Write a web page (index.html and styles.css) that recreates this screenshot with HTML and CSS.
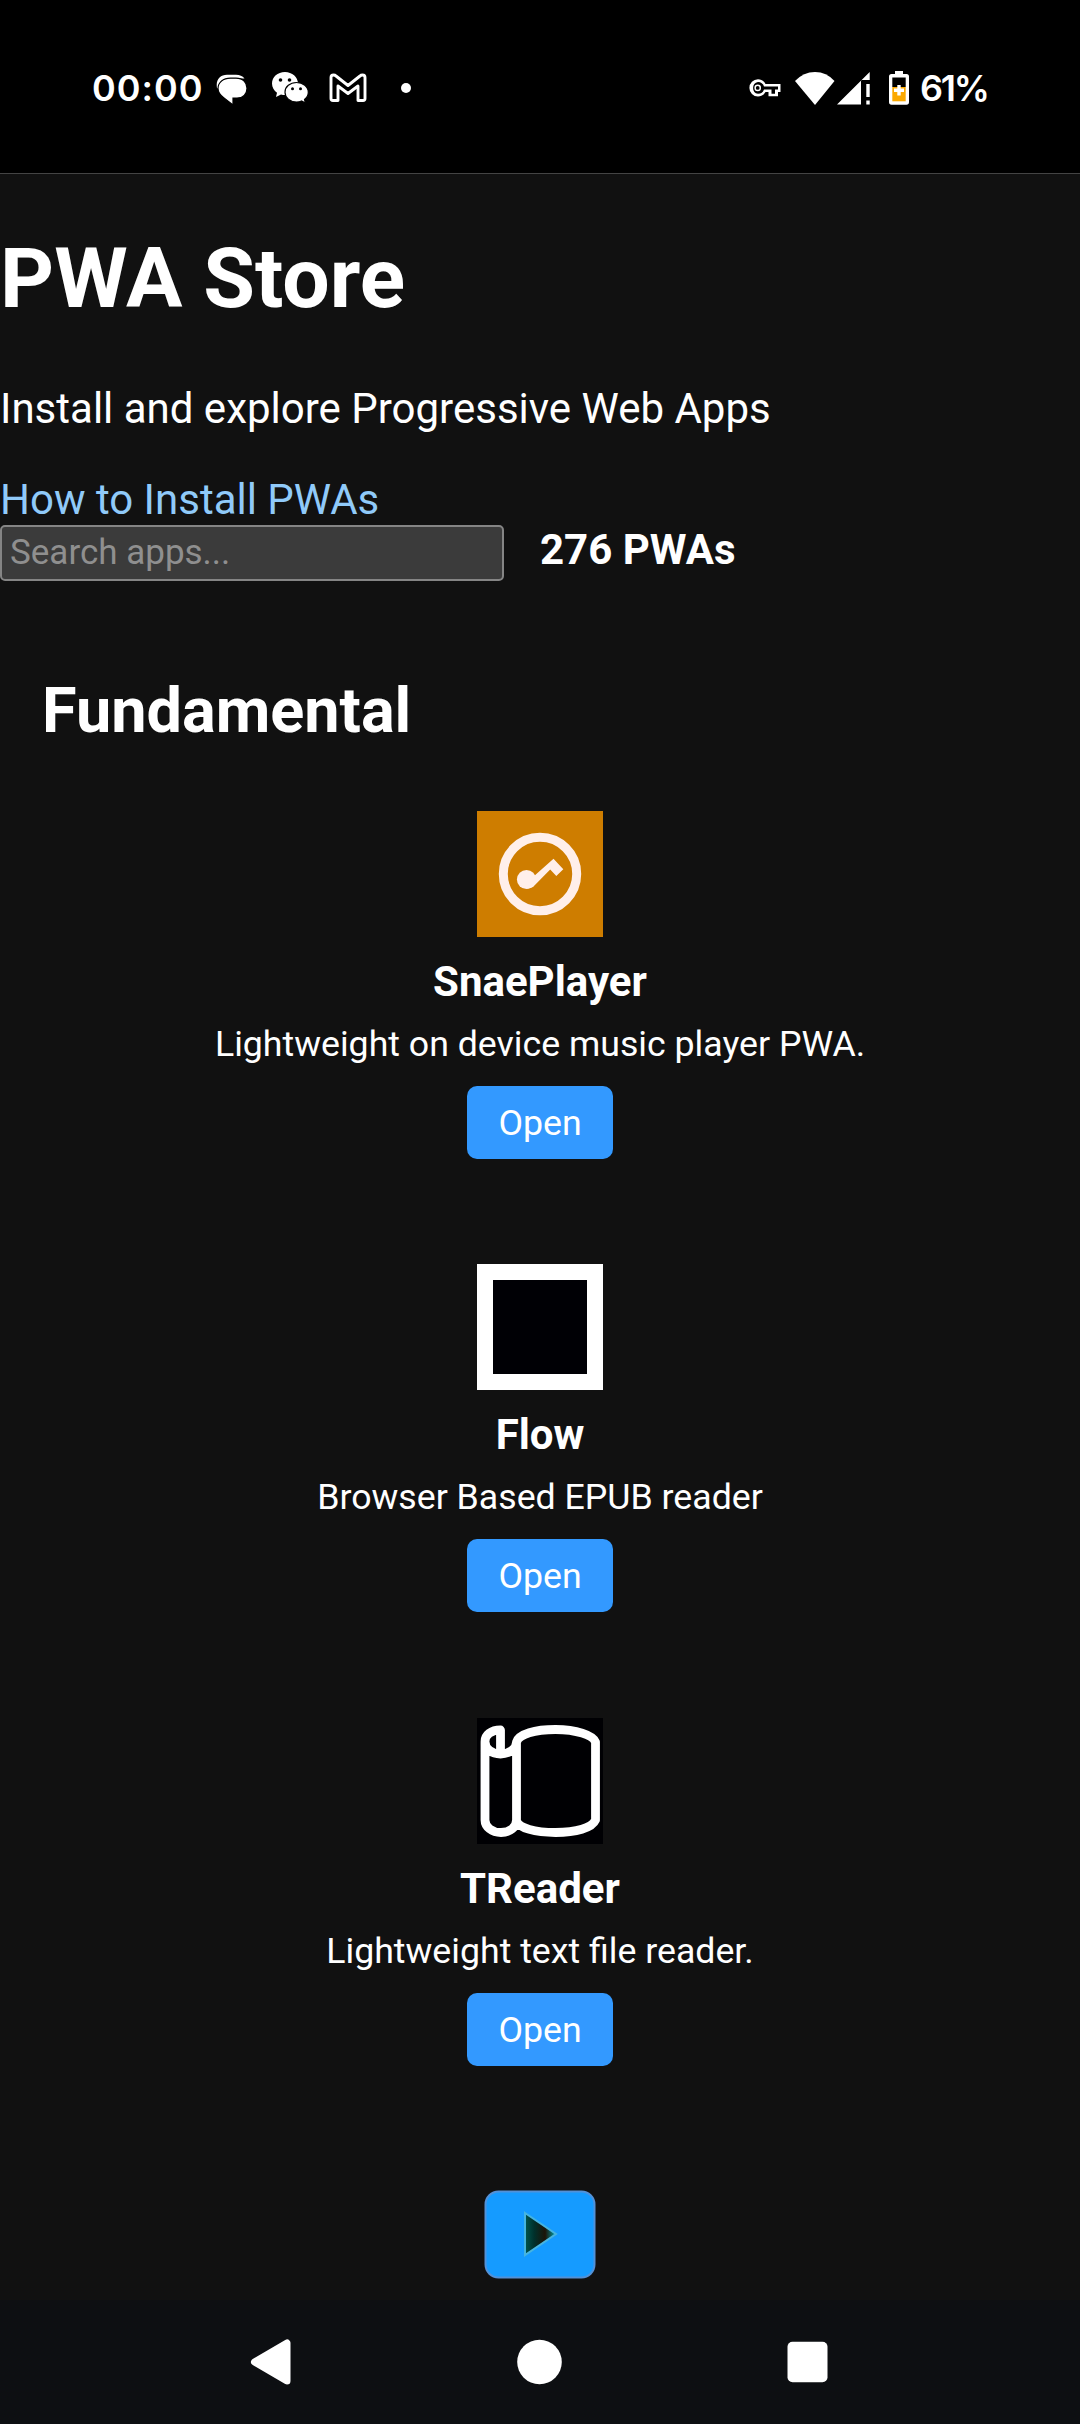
FILE: index.html
```html
<!DOCTYPE html>
<html lang="en">
<head>
<meta charset="utf-8">
<title>PWA Store</title>
<link rel="stylesheet" href="styles.css">
</head>
<body>
<div class="screen">
  <header class="status">
    <div class="status-left">
      <span class="clock">00:00</span>
      <svg class="ic-chat" width="32" height="32" viewBox="0 0 32 32"><path d="M1 14C-.5 6 4 .8 11 .8H20Q25.500.8 28.500 4.500H14C6 4.500 2 8 3 15Z" fill="#fff"/><path d="M14.500 4.200H20C27 4.200 31 8.500 31 14.300S27 24 21 24H17V31L8 24C4 21 2 18 2 14.500C2 8.500 7 4.200 14.500 4.200Z" fill="#fff" stroke="#000" stroke-width="1.200"/></svg>
      <svg class="ic-wechat" width="38" height="34" viewBox="0 0 38 34"><path d="M14 1C6.500 1 1 6 1 12.500C1 16.500 3 19.600 6 21.700L5 26L10 23.500Q14 24.500 18 23.500C24 22 27 18 27 12.500C27 6 21 1 14 1Z" fill="#fff"/><path d="M25.500 11.500C19 11.500 14 15.800 14 21.200S19 31 25.500 31Q28.500 31 30.500 30L34.500 32L33.500 28.500C36 26.500 37.300 24 37.300 21.200C37.300 15.800 32 11.500 25.500 11.500Z" fill="#fff" stroke="#000" stroke-width="1.200"/><g fill="#000"><circle cx="9.500" cy="9" r="1.800"/><circle cx="18.500" cy="9" r="1.800"/><circle cx="21.500" cy="17.700" r="1.500"/><circle cx="29.500" cy="17.700" r="1.500"/></g></svg>
      <svg class="ic-mail" width="38" height="30" viewBox="0 0 38 30"><path d="M2 4.500V25.500Q2 27.500 4 27.500H9V13L19 20.500L29 13V27.500H34Q36 27.500 36 25.500V4.500Q36 2 33.500 2Q32 2 31 3L19 12.500L7 3Q6 2 4.500 2Q2 2 2 4.500Z" fill="none" stroke="#fff" stroke-width="2.900" stroke-linejoin="round"/></svg>
      <span class="dot"></span>
    </div>
    <div class="status-right">
      <svg class="ic-key" width="34" height="20" viewBox="0 0 34 20"><path d="M17.500 6C16 3 13.500 1.300 10 1.300A8.600 8.600 0 1 0 10 18.500C13.500 18.500 16 16.800 17.500 14H20.500V18.300H30V14H32.500V6Z" fill="#fff"/><path d="M16 8.500C15 5.500 13 4 10 4A6 6 0 0 0 10 15.800C13 15.800 15 14.500 16 11.500H23.500V15.700H27V11.500H30V8.500Z" fill="#000"/><circle cx="9.700" cy="9.900" r="3.300" fill="#fff"/><circle cx="9.700" cy="9.900" r="1.900" fill="#000"/></svg>
      <svg class="ic-wifi" width="40" height="33" viewBox="0 0 40 33"><path d="M0 9Q8.500 0 20 0T39.500 9L20 33Z" fill="#fff"/></svg>
      <svg class="ic-signal" width="34" height="33" viewBox="0 0 34 33"><path d="M0 32.500L32.700 0V8H24V32.500Z" fill="#fff"/><path d="M29.300 12H32.700V25H29.300ZM29.300 28.500H32.700V32.500H29.300Z" fill="#fff"/></svg>
      <svg class="ic-battery" width="20" height="34" viewBox="0 0 20 34"><path d="M6 0H14V3H17.500Q20 3 20 5.500V31Q20 33.700 17.500 33.700H2.500Q0 33.700 0 31V5.500Q0 3 2.500 3H6Z" fill="#fff"/><path d="M3.300 6.500H16.700V16H3.300Z" fill="#000"/><path d="M3.300 16H16.700V30.300H3.300Z" fill="#fba900"/><path d="M8.300 14H11.700V17.500H15V21H11.700V24.500H8.300V21H5V17.500H8.300Z" fill="#fff"/></svg>
      <span class="percent">61%</span>
    </div>
  </header>

  <main class="page">
    <h1 class="title">PWA Store</h1>
    <p class="lead">Install and explore Progressive Web Apps</p>
    <a class="help">How to Install PWAs</a>
    <div class="search-row">
      <input class="search" type="text" placeholder="Search apps...">
      <strong class="count">276 PWAs</strong>
    </div>
    <section class="category">
      <h2 class="category-title">Fundamental</h2>
      <div class="apps">
        <article class="app">
          <svg class="app-icon" viewBox="0 0 126 126"><path fill="#ce7d00" d="M0 0H126V126H0Z"/><circle cx="63" cy="63" r="36.700" fill="none" stroke="#ffefea" stroke-width="9"/><circle cx="49.500" cy="68.500" r="9.600" fill="#ffefea"/><path d="M56 66L76.500 47.800L86.300 58.300L79.300 65L73.200 58.500L56 76L50 78Z" fill="#ffefea"/></svg>
          <h3 class="app-name">SnaePlayer</h3>
          <p class="app-text">Lightweight on device music player PWA.</p>
          <button class="open">Open</button>
        </article>
        <article class="app">
          <svg class="app-icon" viewBox="0 0 126 126"><path fill="#fff" d="M0 0H126V126H0Z"/><path fill="#000005" d="M16 16H110V110H16Z"/></svg>
          <h3 class="app-name">Flow</h3>
          <p class="app-text">Browser Based EPUB reader</p>
          <button class="open">Open</button>
        </article>
        <article class="app">
          <svg class="app-icon" viewBox="0 0 126 126"><path fill="#000003" d="M0 0H126V126H0Z"/><g fill="none" stroke="#fff" stroke-width="8.800" stroke-linecap="round" stroke-linejoin="round"><path d="M23.500 12C14 12 8 17 8 23.500C8 31 15 36 23.500 36C32 36 39.500 31 39.500 24M23.500 12V33M8 24V102C8 109 15 114.500 24 114.500S39.500 109 39.500 102V24C42 16 58 11.500 78.500 11.500S116 17 118.500 24V102C115 110 99 114.500 78.500 114.500S42 110 39.500 103"/></g></svg>
          <h3 class="app-name">TReader</h3>
          <p class="app-text">Lightweight text file reader.</p>
          <button class="open">Open</button>
        </article>
        <article class="app">
          <svg class="app-icon" viewBox="0 0 126 126"><defs><linearGradient id="arrow"><stop offset="0" stop-color="#00564f"/><stop offset=".3" stop-color="#00302b"/><stop offset=".65" stop-color="#1c1408"/><stop offset="1" stop-color="#00a6b0"/></linearGradient></defs><rect x="8.500" y="20.500" width="109" height="86" rx="13" fill="#159bff" stroke="#5291d8" stroke-width="2"/><path d="M48 42L79 63L48 84Z" fill="url(#arrow)" stroke="#46b4e0" stroke-width="2"/></svg>
        </article>
      </div>
    </section>
  </main>

  <nav class="nav">
    <svg class="nav-icon" width="46" height="46" viewBox="0 0 46 46"><path d="M6.500 23L39 4V42Z" fill="#fff" stroke="#fff" stroke-width="7" stroke-linejoin="round"/></svg>
    <svg class="nav-icon" width="46" height="46" viewBox="0 0 46 46"><circle cx="22.500" cy="23" r="22.300" fill="#fff"/></svg>
    <svg class="nav-icon" width="46" height="46" viewBox="0 0 46 46"><rect x="2.500" y="2.700" width="40" height="40.500" rx="5" fill="#fff"/></svg>
  </nav>
</div>
</body>
</html>
```
FILE: styles.css
```css
* { box-sizing: border-box; }
body { margin: 0; background: #111; color: #fff; font-family: Roboto, sans-serif; }
h1, h2, h3, p { margin: 0; }
svg { display: block; flex: none; }

.screen { display: flex; flex-direction: column; width: 1080px; height: 2424px; overflow: hidden; }

.status { flex: none; display: flex; justify-content: space-between; height: 174px; padding: 0 92px; background: #000; border-bottom: 1px solid #444; font-family: Inter, sans-serif; font-weight: 600; font-size: 36px; line-height: 44px; }
.status-left, .status-right { display: flex; align-items: center; height: 176px; }
.clock { width: 112px; letter-spacing: 1px; white-space: nowrap; }
.ic-chat { margin: 4px 0 0 12px; }
.ic-wechat { margin-left: 23px; }
.ic-mail { margin-left: 20px; }
.dot { width: 10px; height: 10px; margin-left: 34px; border-radius: 50%; background: #fff; }
.ic-wifi { margin-left: 13px; }
.ic-signal { margin-left: 2px; }
.ic-battery { margin: 0 11px 0 18px; }
.percent { width: 68px; white-space: nowrap; letter-spacing: -2.300px; }

.page { flex: 1; min-height: 0; overflow: hidden; padding-top: 56px; }
.title { font-size: 84px; line-height: 98px; font-weight: 700; }
.lead { margin: 56px 0 42px; font-size: 42px; line-height: 49px; }
.help { display: block; font-size: 42px; line-height: 49px; color: #90caf9; }
.search-row { display: flex; align-items: flex-start; gap: 36px; margin-top: 1px; height: 56px; }
.search { width: 504px; height: 56px; padding: 0 8px 2px; border: 2px solid #858585; border-radius: 5px; background: #3b3b3b; color: #fff; font: 35px/41px Roboto, sans-serif; }
.search::placeholder { color: #8f8f8f; opacity: 1; }
.count { font-size: 42px; line-height: 49px; font-weight: 700; }
.category { padding: 93px 42px 0; }
.category-title { font-size: 63px; line-height: 74px; font-weight: 700; }
.apps { display: flex; flex-direction: column; gap: 105.400px; padding-top: 63px; }
.app { display: flex; flex-direction: column; align-items: center; text-align: center; }
.app-icon { width: 126px; height: 126px; }
.app-name { margin-top: 20px; font-size: 42px; line-height: 49px; font-weight: 700; }
.app-text { margin-top: 17px; font-size: 35.700px; line-height: 42px; }
.open { margin-top: 21px; width: 146px; height: 73px; padding: 1px 0 0; border: 0; border-radius: 10px; background: #39f; color: #fff; font: 35.700px/42px Roboto, sans-serif; }

.nav { flex: none; display: flex; justify-content: space-between; align-items: center; height: 124px; padding: 0 249px 1px 248px; background: #0d0f12; }
```
